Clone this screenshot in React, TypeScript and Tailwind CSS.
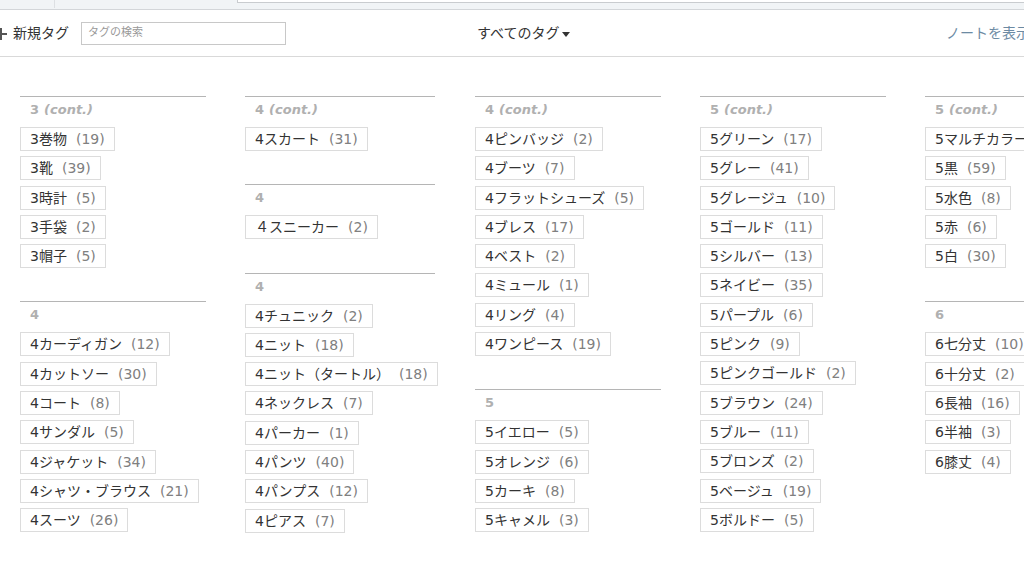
import React from "react";

type Tag = [string, number];
type Group = { label: string; cont?: boolean; tags: Tag[] };

const columns: Group[][] = [
  [
    { label: "3", cont: true, tags: [["3巻物", 19], ["3靴", 39], ["3時計", 5], ["3手袋", 2], ["3帽子", 5]] },
    {
      label: "4",
      tags: [["4カーディガン", 12], ["4カットソー", 30], ["4コート", 8], ["4サンダル", 5], ["4ジャケット", 34], ["4シャツ・ブラウス", 21], ["4スーツ", 26]],
    },
  ],
  [
    { label: "4", cont: true, tags: [["4スカート", 31]] },
    { label: "4", tags: [["４スニーカー", 2]] },
    {
      label: "4",
      tags: [["4チュニック", 2], ["4ニット", 18], ["4ニット（タートル）", 18], ["4ネックレス", 7], ["4パーカー", 1], ["4パンツ", 40], ["4パンプス", 12], ["4ピアス", 7]],
    },
  ],
  [
    {
      label: "4",
      cont: true,
      tags: [["4ピンバッジ", 2], ["4ブーツ", 7], ["4フラットシューズ", 5], ["4ブレス", 17], ["4ベスト", 2], ["4ミュール", 1], ["4リング", 4], ["4ワンピース", 19]],
    },
    { label: "5", tags: [["5イエロー", 5], ["5オレンジ", 6], ["5カーキ", 8], ["5キャメル", 3]] },
  ],
  [
    {
      label: "5",
      cont: true,
      tags: [
        ["5グリーン", 17], ["5グレー", 41], ["5グレージュ", 10], ["5ゴールド", 11], ["5シルバー", 13], ["5ネイビー", 35], ["5パープル", 6],
        ["5ピンク", 9], ["5ピンクゴールド", 2], ["5ブラウン", 24], ["5ブルー", 11], ["5ブロンズ", 2], ["5ベージュ", 19], ["5ボルドー", 5],
      ],
    },
  ],
  [
    { label: "5", cont: true, tags: [["5マルチカラー", 3], ["5黒", 59], ["5水色", 8], ["5赤", 6], ["5白", 30]] },
    { label: "6", tags: [["6七分丈", 10], ["6十分丈", 2], ["6長袖", 16], ["6半袖", 3], ["6膝丈", 4]] },
  ],
];

// left offsets of the five columns
const colClass = ["w-[186px]", "ml-[39px] w-[190px]", "ml-[40px] w-[186px]", "ml-[39px] w-[186px]", "ml-[39px] w-[186px]"];

const font = { fontFamily: '"DejaVu Sans", "Noto Sans CJK JP", sans-serif' };

function TagGroup({ group }: { group: Group }) {
  return (
    <div className="mb-[28px] border-t border-[#b5b5b5]">
      <div className="h-[30px] pt-[4px] pl-[10px] text-[13px] font-bold leading-[18px] text-[#b0b0b0]">
        {group.label}
        {group.cont && <span className="ml-[5px] italic">(cont.)</span>}
      </div>
      <div className="flex flex-col items-start">
        {group.tags.map(([name, count]) => (
          <div
            key={name}
            className="mb-[5.3px] flex h-[24px] items-center whitespace-nowrap border border-[#dcdcdc] bg-white px-[9px] text-[14px] leading-[20px] text-[#333333]"
          >
            <span>{name}</span>
            <span className="ml-[9px] text-[#808080]">({count})</span>
          </div>
        ))}
      </div>
    </div>
  );
}

export default function App() {
  return (
    <div className="h-[578px] w-[1024px] overflow-hidden bg-white" style={font}>
      <div className="relative h-[10px] border-b border-[#d3d6d9] bg-[#f1f4f6]">
        <div className="absolute left-[54px] top-0 h-[8px] w-px bg-[#dde0e3]" />
        <div className="absolute left-[237px] right-0 top-0 h-[3px] border-b border-l border-[#c9cccf] bg-white" />
      </div>
      <div className="flex h-[47px] items-center overflow-hidden whitespace-nowrap border-b border-[#d9d9d9]">
        <div className="flex w-[477px] shrink-0 items-center">
          <svg width="12" height="12" viewBox="0 0 12 12" className="ml-[-5px] mt-[1px]">
            <rect x="5" y="0" width="2" height="12" fill="#555" />
            <rect x="0" y="5" width="12" height="2" fill="#555" />
          </svg>
          <span className="ml-[6px] text-[14px] text-[#333]">新規タグ</span>
          <div className="ml-[12px] flex h-[23px] w-[205px] items-center border border-[#c8c8c8] px-[6px] text-[11px] text-[#999]">
            タグの検索
          </div>
        </div>
        <div className="flex w-[469px] shrink-0 items-center text-[14px] text-[#333]">
          すべてのタグ
          <svg width="8" height="5" viewBox="0 0 8 5" className="ml-[3px] mt-[2px]">
            <path d="M0 0h8L4 5z" fill="#333" />
          </svg>
        </div>
        <div className="shrink-0 text-[14px] text-[#6c8aa3]">ノートを表示する</div>
      </div>
      <div className="flex pl-[20px] pt-[39px]">
        {columns.map((col, i) => (
          <div key={i} className={`shrink-0 ${colClass[i]}`}>
            {col.map((g, j) => (
              <TagGroup key={j} group={g} />
            ))}
          </div>
        ))}
      </div>
    </div>
  );
}
